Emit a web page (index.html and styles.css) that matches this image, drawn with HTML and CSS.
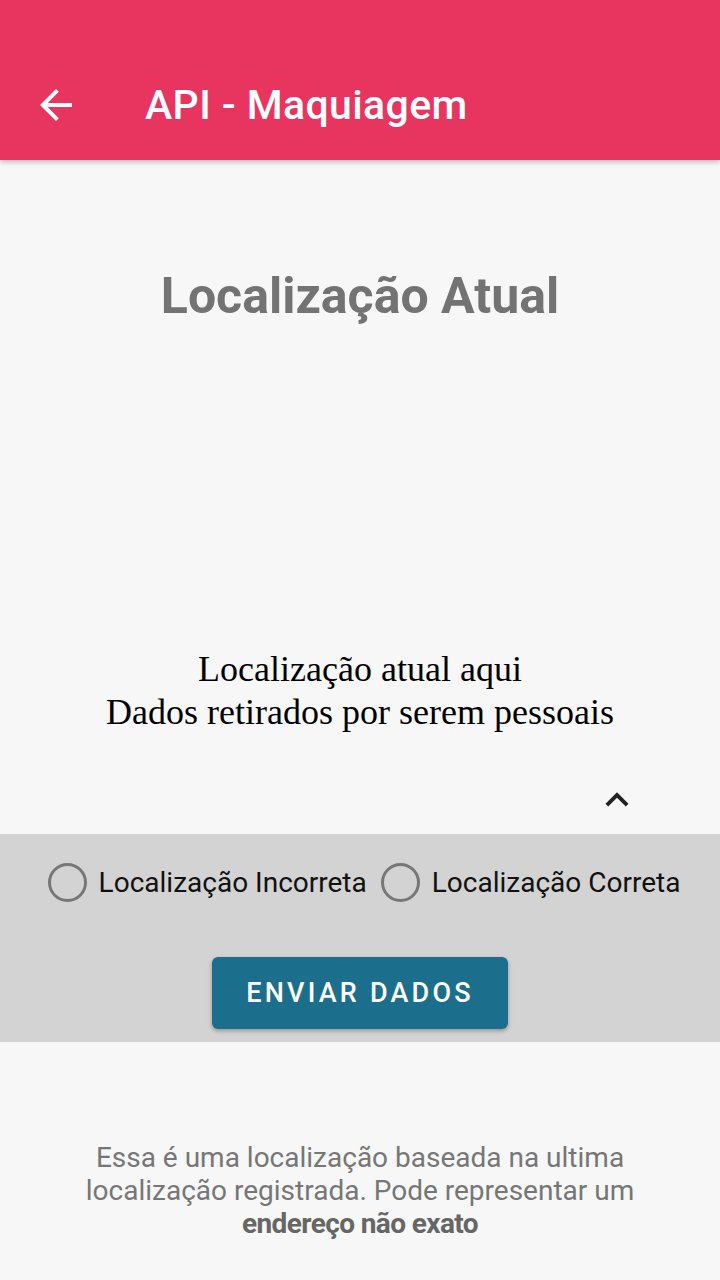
FILE: index.html
```html
<!DOCTYPE html>
<html lang="pt">
<head>
<meta charset="utf-8">
<link rel="stylesheet" href="styles.css">
</head>
<body>
<header class="appbar">
  <svg class="back" viewBox="0 0 24 24" width="48" height="48"><path d="M20 11H7.83l5.59-5.59L12 4l-8 8 8 8 1.41-1.41L7.83 13H20v-2z" fill="#fff"/></svg>
  <h1 class="title">API - Maquiagem</h1>
</header>
<main class="content">
  <h2 class="heading">Localização Atual</h2>
  <div class="serif">Localização atual aqui<br>Dados retirados por serem pessoais</div>
  <div class="chev-row">
    <svg class="chev" viewBox="0 0 24 24" width="46" height="46"><path d="M7.41 15.41 12 10.83l4.59 4.58L18 14l-6-6-6 6z" fill="#222"/></svg>
  </div>
  <section class="panel">
    <div class="radios">
      <label class="radio"><span class="circle"></span>Localização Incorreta</label>
      <label class="radio"><span class="circle"></span>Localização Correta</label>
    </div>
    <button class="btn">ENVIAR DADOS</button>
  </section>
  <p class="note">Essa é uma localização baseada na ultima localização registrada. Pode representar um <b>endereço não exato</b></p>
</main>
</body>
</html>
```
FILE: styles.css
```css
html, body { margin: 0; padding: 0; }
body { background: #f7f7f7; width: 720px; height: 1280px; overflow: hidden; font-family: Roboto, "Noto Sans", sans-serif; }
.appbar { height: 160px; background: #e8355f; display: flex; align-items: center; padding-top: 50px; box-sizing: border-box; box-shadow: 0 2px 5px rgba(0,0,0,0.25); position: relative; z-index: 1; }
.back { margin-left: 32px; width: 48px; height: 48px; }
.title { margin: 0 0 0 65px; color: #fff; font-weight: 500; font-size: 41px; letter-spacing: 0.4px; }
.content { display: flex; flex-direction: column; }
.heading { margin: 108px 0 0; text-align: center; color: #737373; font-size: 50px; font-weight: 700; line-height: 56px; }
.serif { margin-top: 324px; text-align: center; font-family: "Liberation Serif", serif; font-size: 36px; line-height: 43px; color: #000; }
.chev-row { display: flex; justify-content: flex-end; align-items: flex-start; padding-right: 80px; margin-top: 43px; height: 57px; }
.chev { width: 46px; height: 46px; }
.panel { background: #d3d3d3; height: 208px; display: flex; flex-direction: column; align-items: center; }
.radios { display: flex; gap: 14px; margin-top: 29px; padding-left: 8px; }
.radio { display: flex; align-items: center; font-size: 28px; color: #111; }
.circle { width: 39px; height: 39px; border: 3px solid #777; border-radius: 50%; box-sizing: border-box; margin-right: 12px; }
.btn { margin-top: 55px; width: 296px; height: 72px; background: #1b6e8c; border: 0; border-radius: 6px; color: #fff; font-family: Roboto, sans-serif; font-size: 27px; font-weight: 500; letter-spacing: 3.2px; box-shadow: 0 2px 4px rgba(0,0,0,0.3); }
.note { margin: 99px 40px 0; text-align: center; color: #767676; font-size: 28px; line-height: 33px; }
.note b { color: #666; font-weight: 700; letter-spacing: -0.6px; }
```
